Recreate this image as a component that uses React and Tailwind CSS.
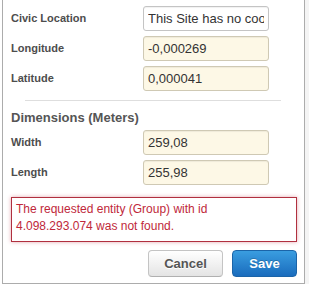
import React from 'react';

const fields = [
  { label: 'Civic Location', value: 'This Site has no coordinates', plain: true },
  { label: 'Longitude', value: '-0,000269' },
  { label: 'Latitude', value: '0,000041' },
];

const dims = [
  { label: 'Width', value: '259,08' },
  { label: 'Length', value: '255,98' },
];

const Row = ({ label, value, plain }) => (
  <div className="flex items-center h-[25px]">
    <label className="w-[140px] pl-[8px] text-[11px] font-bold text-[#4d4d4d]">{label}</label>
    <input
      readOnly
      value={value}
      className={`w-[126px] h-[25px] border rounded-[3px] px-[4px] text-[13px] text-[#333] outline-none shadow-[inset_0_1px_1px_rgba(0,0,0,0.06)] ${
        plain ? 'bg-white border-[#c4c4c4]' : 'bg-[#fdf8e6] border-[#cfc9b4]'
      }`}
    />
  </div>
);

export default function App() {
  return (
    <div className="w-[309px] h-[290px] bg-[#f4f4f4] overflow-hidden font-['Liberation_Sans',Arial,sans-serif]">
      <div className="flex h-[284px]">
        <div className="w-[2px] bg-white" />
        <div className="w-[303px] h-[284px] bg-white border-l border-r border-b border-[#acacac] flex flex-col">
          {/* Location */}
          <div className="flex flex-col gap-[5px] pt-[6px]">
            {fields.map((f) => (
              <Row key={f.label} {...f} />
            ))}
          </div>

          <div className="ml-[22px] w-[256px] h-px bg-[#dedede] mt-[9px]" />

          {/* Dimensions */}
          <h3 className="mt-[9px] pl-[8px] text-[13px] leading-[16px] font-bold text-[#555]">Dimensions (Meters)</h3>
          <div className="flex flex-col gap-[5px] mt-[4px]">
            {dims.map((f) => (
              <Row key={f.label} {...f} />
            ))}
          </div>

          {/* Error */}
          <div className="ml-[8px] mt-[12px] w-[286px] h-[45px] border border-[#b0303f] bg-white px-[4px] pt-[3px] text-[12px] leading-[17px] text-[#c0283a] shadow-[0_0_4px_rgba(200,60,80,0.45)]">
            The requested entity (Group) with id
            <br />
            4.098.293.074 was not found.
          </div>

          {/* Actions */}
          <div className="flex justify-end gap-[9px] mt-[8px] mr-[7px]">
            <button className="w-[75px] h-[27px] rounded-[4px] border border-[#c4c4c4] border-b-[#b0b0b0] bg-gradient-to-b from-white to-[#e4e4e4] text-[13px] font-bold text-[#555] [text-shadow:0_1px_0_#fff]">
              Cancel
            </button>
            <button className="w-[65px] h-[27px] rounded-[4px] border border-[#1b64a8] bg-gradient-to-b from-[#3a9de0] to-[#1a6cbd] text-[13px] font-bold text-white [text-shadow:0_-1px_0_rgba(0,0,0,0.2)]">
              Save
            </button>
          </div>
        </div>
      </div>
      <div className="h-[6px] bg-white" />
    </div>
  );
}
